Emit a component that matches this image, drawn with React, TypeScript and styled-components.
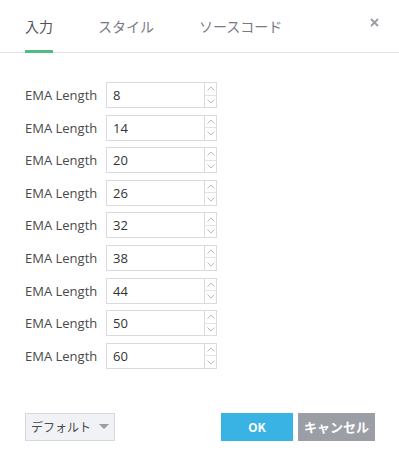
import * as React from 'react';
import styled, { createGlobalStyle } from 'styled-components';

const values = [8, 14, 20, 26, 32, 38, 44, 50, 60];
const tabs = ['入力', 'スタイル', 'ソースコード'];

function Chevron({ up }: { up?: boolean }) {
	return (
		<svg width='8' height='5' viewBox='0 0 8 5'>
			<path
				d={up ? 'M0.5 4.5 L4 1 L7.5 4.5' : 'M0.5 0.5 L4 4 L7.5 0.5'}
				fill='none'
				stroke='#b5bdc9'
				strokeWidth='1'
			/>
		</svg>
	);
}

function App() {
	let [active, setActive] = React.useState(0);

	return (
		<>
			<GlobalStyle />
			<Dialog>
				<Header>
					{tabs.map((t, i) => (
						<Tab key={t} $active={i === active} onClick={() => setActive(i)}>
							{t}
						</Tab>
					))}
					<Close aria-label='close'>
						<svg width='9' height='9' viewBox='0 0 9 9'>
							<path d='M1 1 L8 8 M8 1 L1 8' stroke='#9a9ca5' strokeWidth='1.8' />
						</svg>
					</Close>
				</Header>
				<Body>
					{values.map((v, i) => (
						<Row key={i}>
							<Label>EMA Length</Label>
							<NumberBox>
								<Value>{v}</Value>
								<Spinner>
									<SpinButton>
										<Chevron up />
									</SpinButton>
									<SpinButton>
										<Chevron />
									</SpinButton>
								</Spinner>
							</NumberBox>
						</Row>
					))}
				</Body>
				<Footer>
					<DefaultButton>
						デフォルト
						<Caret />
					</DefaultButton>
					<Spacer />
					<ActionButton $bg='#38b3e3'>OK</ActionButton>
					<ActionButton $bg='#9c9ea5' $wide>
						キャンセル
					</ActionButton>
				</Footer>
			</Dialog>
		</>
	);
}

export default App;

var GlobalStyle = createGlobalStyle`
	body {
		margin: 0;
		background: #fff;
		font-family: 'Open Sans', 'Noto Sans CJK JP', sans-serif;
	}
`;

var Dialog = styled.div`
	width: 399px;
	height: 466px;
	display: flex;
	flex-direction: column;
	background: #fff;
`;

var Header = styled.div`
	display: flex;
	align-items: stretch;
	height: 52px;
	padding-left: 25px;
	border-bottom: 1px solid #e0e3eb;
`;

var Tab = styled.div<{ $active?: boolean }>`
	display: flex;
	align-items: center;
	padding-top: 1px;
	margin-right: 45px;
	margin-bottom: -1px;
	font-family: 'Noto Sans CJK JP', sans-serif;
	font-size: 14px;
	color: ${(p) => (p.$active ? '#50535e' : '#777a84')};
	border-bottom: 3px solid ${(p) => (p.$active ? '#53b987' : 'transparent')};
	cursor: pointer;
`;

var Close = styled.div`
	margin-left: auto;
	width: 50px;
	display: flex;
	justify-content: center;
	padding-top: 18px;
	box-sizing: border-box;
`;

var Body = styled.div`
	display: flex;
	flex-direction: column;
	gap: 6.6px;
	padding: 29px 0 0 25px;
`;

var Row = styled.div`
	display: flex;
	align-items: center;
`;

var Label = styled.div`
	width: 81px;
	font-size: 13px;
	color: #4a4a4a;
`;

var NumberBox = styled.div`
	display: flex;
	width: 111px;
	height: 26px;
	box-sizing: border-box;
	border: 1px solid #d9dbe0;
`;

var Value = styled.div`
	flex: 1;
	display: flex;
	align-items: center;
	padding-left: 6px;
	font-size: 13px;
	color: #333;
`;

var Spinner = styled.div`
	width: 11px;
	display: flex;
	flex-direction: column;
	border-left: 1px solid #d9dbe0;
`;

var SpinButton = styled.div`
	flex: 1;
	display: flex;
	align-items: center;
	justify-content: center;
	& + & {
		border-top: 1px solid #e2e4e8;
	}
`;

var Footer = styled.div`
	display: flex;
	align-items: center;
	gap: 5px;
	padding: 0 24px 0 25px;
	margin-top: 44px;
`;

var Spacer = styled.div`
	flex: 1;
`;

var DefaultButton = styled.div`
	display: flex;
	align-items: center;
	justify-content: center;
	gap: 8px;
	width: 90px;
	height: 28px;
	box-sizing: border-box;
	background: #f1f2f6;
	border: 1px solid #d6d8dd;
	font-family: 'Noto Sans CJK JP', sans-serif;
	font-size: 12px;
	color: #4a4a4a;
`;

var Caret = styled.span`
	width: 0;
	height: 0;
	border-left: 5px solid transparent;
	border-right: 5px solid transparent;
	border-top: 5px solid #9a9ca5;
`;

var ActionButton = styled.div<{ $bg: string; $wide?: boolean }>`
	display: flex;
	align-items: center;
	justify-content: center;
	width: ${(p) => (p.$wide ? '77px' : '72px')};
	height: 28px;
	background: ${(p) => p.$bg};
	color: #fff;
	font-family: 'Noto Sans CJK JP', sans-serif;
	font-weight: bold;
	font-size: ${(p) => (p.$wide ? '13px' : '12px')};
`;
